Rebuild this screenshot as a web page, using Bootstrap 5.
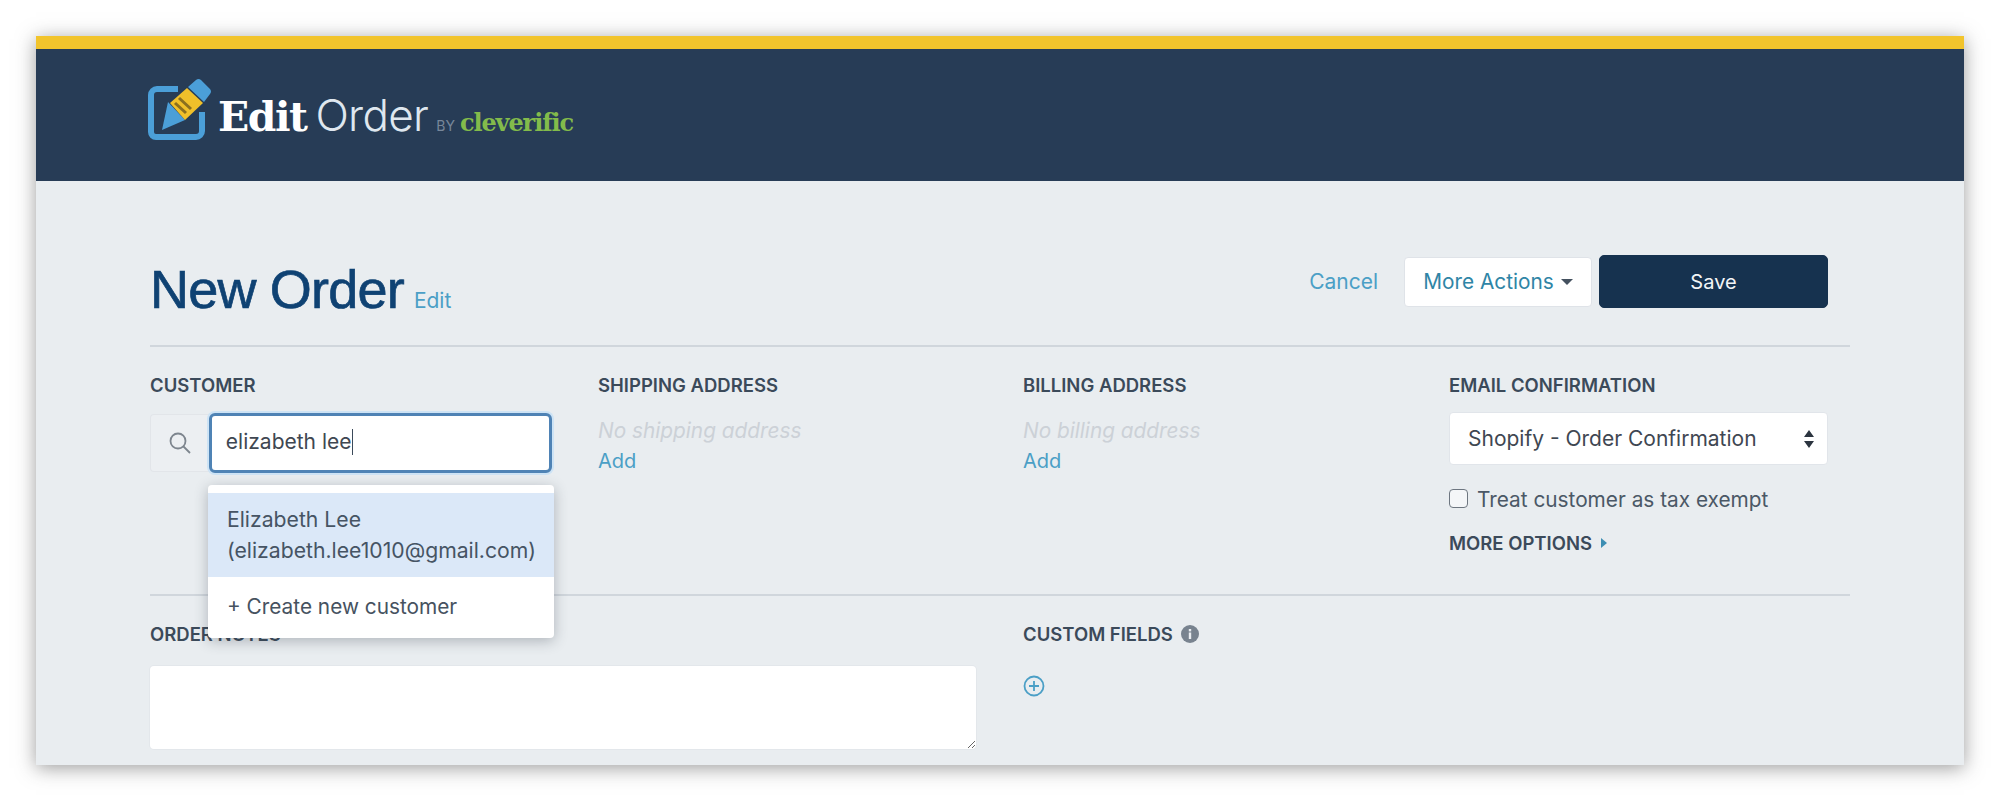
<!doctype html>
<html lang="en">
<head>
<meta charset="utf-8">
<title>Edit Order</title>
<link href="https://cdn.jsdelivr.net/npm/bootstrap@5.3.0/dist/css/bootstrap.min.css" rel="stylesheet">
<style>
html,body{height:800px;overflow:hidden;background:#fff;}
body{font-family:"Inter","Liberation Sans",sans-serif;color:#3f4d5c;padding:36px;}
a{text-decoration:none;color:#4b9fc6;}
.eo-frame{height:729px;background:#e9edf0;box-shadow:0 3px 18px rgba(60,60,60,.5);overflow:hidden;}
.eo-top{height:145px;background:#273c56;border-top:13px solid #f2c42c;padding:27px 0 0 112px;}
.eo-logo-row{height:64px;}
.eo-logo-ed{font-family:"DejaVu Serif",serif;font-weight:700;font-size:41px;line-height:1;color:#fff;letter-spacing:-1.5px;margin-left:4px;}
.eo-logo-or{font-weight:300;font-size:44px;line-height:1;color:#dfe7ef;letter-spacing:-.7px;margin-left:9px;}
.eo-logo-by{font-size:14px;line-height:1;color:#77879a;margin:0 5px 0 8px;}
.eo-logo-cl{font-family:"DejaVu Serif",serif;font-weight:700;font-size:24px;line-height:1;color:#83bb4b;letter-spacing:-1.1px;}
.eo-logo-text{margin-bottom:2px;}
.eo-main{padding:0 114px;}
.eo-head{height:166px;padding-top:75px;border-bottom:2px solid #d0d6dc;}
.eo-title{font-size:54px;line-height:62px;font-weight:500;color:#0f4273;margin:2px 0 0;letter-spacing:-.8px;font-family:"Liberation Sans",sans-serif;-webkit-text-stroke:.7px #0f4273;}
.eo-title-edit{font-size:21px;margin-left:10px;}
.eo-actions{margin-right:22px;margin-top:-1px;}
.eo-link{font-size:21px;line-height:26px;}
.eo-btn-more{width:188px;height:50px;background:#fff;border:1px solid #dfe3e8;border-radius:4px;color:#2f85a6;font-size:20.8px;padding:0;margin-left:26px;}
.eo-btn-more.dropdown-toggle::after{margin-left:7px;vertical-align:.2em;border-top-color:#44515f;}
.eo-btn-save{width:229px;height:53px;background:#16324f;border:1px solid #16324f;border-radius:5px;color:#f3f5f7;font-size:20px;padding:0;margin-left:7px;}
.eo-btn-save:hover{background:#16324f;color:#fff;}
.eo-cols{display:grid;grid-template-columns:448px 425px 426px 1fr;height:249px;padding-top:27px;border-bottom:2px solid #d0d6dc;}
.eo-label{font-size:18.5px;line-height:22px;font-weight:600;color:#3b4a5a;margin:0 0 17px;}
.eo-label-addr{margin-bottom:20px;}
.eo-search{width:402px;position:relative;}
.eo-addon{width:59px;height:58px;border:1px solid #e2e5e9;border-right:0;background:#eceff2;border-radius:4px 0 0 4px;margin-top:1px;}
.eo-input{width:344px;height:60px;border:3px solid #4f83b5;border-radius:6px;background:#fff;box-shadow:0 0 0 2px #cde3f5;padding:0 14px;font-size:21px;line-height:52px;color:#3f4752;}
.eo-caret{display:inline-block;width:1.5px;height:26px;background:#3b4a5a;vertical-align:-6px;}
.eo-drop{position:absolute;z-index:5;left:58px;top:72px;width:346px;background:#fff;border-radius:4px;box-shadow:0 3px 14px rgba(50,60,70,.32);padding:8px 0 0;}
.eo-opt{display:block;padding:11px 19px;font-size:21.2px;line-height:31px;color:#465464;}
.eo-opt-on{background:#dbe8f8;}
.eo-opt-new{padding:14px 19px 16px;font-size:20.8px;color:#46525f;}
.eo-muted{font-style:italic;color:#ccd1d7;font-size:20.8px;line-height:30px;}
.eo-add{font-size:20px;line-height:30px;display:block;}
.eo-select{width:379px;height:53px;background-color:#fff;border:1px solid #e1e5ea;border-radius:4px;font-size:21px;line-height:30px;color:#3f4752;padding:0 40px 0 18px;margin-top:-1px;
background-image:url("data:image/svg+xml,%3Csvg xmlns='http://www.w3.org/2000/svg' viewBox='0 0 12 20'%3E%3Cpath fill='%232c3540' d='M6 1l5 7H1zM6 19l-5-7h10z'/%3E%3C/svg%3E");background-size:12px 20px;background-position:right 12px center;}
.eo-check{margin-top:24px;height:22px;}
.eo-box{width:19px;height:19px;margin:0 9px 0 0;border:1.5px solid #6d7680;border-radius:3px;background-color:#f4f6f8;position:relative;top:-2px;}
.eo-check-text{font-size:20.8px;line-height:22px;color:#4b5866;}
.eo-more{font-size:18.5px;line-height:22px;font-weight:600;color:#3b4a5a;margin-top:21px;}
.eo-bottom{display:grid;grid-template-columns:873px 1fr;padding-top:27px;}
.eo-notes{width:826px;height:83px;display:block;border:0;border-radius:4px;background:#fff;box-shadow:0 0 0 1px #e3e7eb;}
.eo-lab2{margin-bottom:27px;}
.eo-lab3{margin-bottom:21px;}
</style>
</head>
<body>
<div class="eo-frame">
  <header class="eo-top">
    <div class="eo-logo-row d-flex align-items-end">
      <svg width="66" height="64" viewBox="0 0 66 64" class="flex-shrink-0" aria-hidden="true">
        <path d="M30 13H9a6 6 0 0 0-6 6v37a5 5 0 0 0 5 5h40a6 6 0 0 0 6-6V36" fill="none" stroke="#4b9fd8" stroke-width="6"/>
        <path d="M20 26L37 44 14 54z" fill="#4b9fd8"/>
        <path d="M22 27L39 12l16 15-18 17z" fill="#f0c02a"/>
        <path d="M31 22l12 11M27 27l11 10" stroke="#8a6f1f" stroke-width="3" fill="none"/>
        <path d="M40 11l8-7a4 4 0 0 1 5 0l9 9a4 4 0 0 1 0 5l-6 8z" fill="#4b9fd8"/>
      </svg>
      <div class="eo-logo-text d-flex align-items-baseline">
        <span class="eo-logo-ed">Edit</span><span class="eo-logo-or">Order</span><span class="eo-logo-by">BY</span><span class="eo-logo-cl">cleverific</span>
      </div>
    </div>
  </header>
  <main class="eo-main">
    <div class="eo-head d-flex justify-content-between align-items-start">
      <div class="d-flex align-items-baseline">
        <h1 class="eo-title">New Order</h1><a href="#" class="eo-title-edit">Edit</a>
      </div>
      <div class="eo-actions d-flex align-items-center">
        <a href="#" class="eo-link">Cancel</a>
        <button type="button" class="btn eo-btn-more dropdown-toggle">More Actions</button>
        <button type="button" class="btn eo-btn-save">Save</button>
      </div>
    </div>
    <div class="eo-cols">
      <section>
        <p class="eo-label">CUSTOMER</p>
        <div class="eo-search d-flex">
          <span class="eo-addon d-flex align-items-center justify-content-center">
            <svg width="24" height="24" viewBox="0 0 24 24" fill="none" stroke="#7d858e" stroke-width="1.8" aria-hidden="true"><circle cx="10" cy="10" r="7.5"/><path d="M15.5 15.5L22 22"/></svg>
          </span>
          <div class="eo-input">elizabeth lee<span class="eo-caret"></span></div>
          <div class="eo-drop">
            <a href="#" class="eo-opt eo-opt-on">Elizabeth Lee<br>(elizabeth.lee1010@gmail.com)</a>
            <a href="#" class="eo-opt eo-opt-new">+ Create new customer</a>
          </div>
        </div>
      </section>
      <section>
        <p class="eo-label eo-label-addr">SHIPPING ADDRESS</p>
        <div class="eo-muted">No shipping address</div>
        <a href="#" class="eo-add">Add</a>
      </section>
      <section>
        <p class="eo-label eo-label-addr">BILLING ADDRESS</p>
        <div class="eo-muted">No billing address</div>
        <a href="#" class="eo-add">Add</a>
      </section>
      <section>
        <p class="eo-label">EMAIL CONFIRMATION</p>
        <select class="form-select eo-select"><option>Shopify - Order Confirmation</option></select>
        <div class="eo-check d-flex align-items-center">
          <input class="form-check-input eo-box" type="checkbox" id="tax">
          <label class="eo-check-text" for="tax">Treat customer as tax exempt</label>
        </div>
        <div class="eo-more d-flex align-items-center">MORE OPTIONS
          <svg width="8" height="10" viewBox="0 0 8 10" class="ms-2" aria-hidden="true"><path d="M1 0l6 5-6 5z" fill="#3d8eb3"/></svg>
        </div>
      </section>
    </div>
    <div class="eo-bottom">
      <section>
        <p class="eo-label eo-lab3">ORDER NOTES</p>
        <textarea class="eo-notes" aria-label="Order notes"></textarea>
      </section>
      <section>
        <p class="eo-label eo-lab2 d-flex align-items-center">CUSTOM FIELDS
          <svg width="18" height="18" viewBox="0 0 18 18" class="ms-2" aria-hidden="true"><circle cx="9" cy="9" r="9" fill="#78838f"/><rect x="7.8" y="7.5" width="2.4" height="6.5" fill="#e9edf1"/><rect x="7.8" y="4" width="2.4" height="2.4" fill="#e9edf1"/></svg>
        </p>
        <svg width="22" height="22" viewBox="0 0 22 22" fill="none" stroke="#4b9fc6" stroke-width="1.8" aria-hidden="true"><circle cx="11" cy="11" r="9.5"/><path d="M11 6v10M6 11h10"/></svg>
      </section>
    </div>
  </main>
</div>
</body>
</html>
